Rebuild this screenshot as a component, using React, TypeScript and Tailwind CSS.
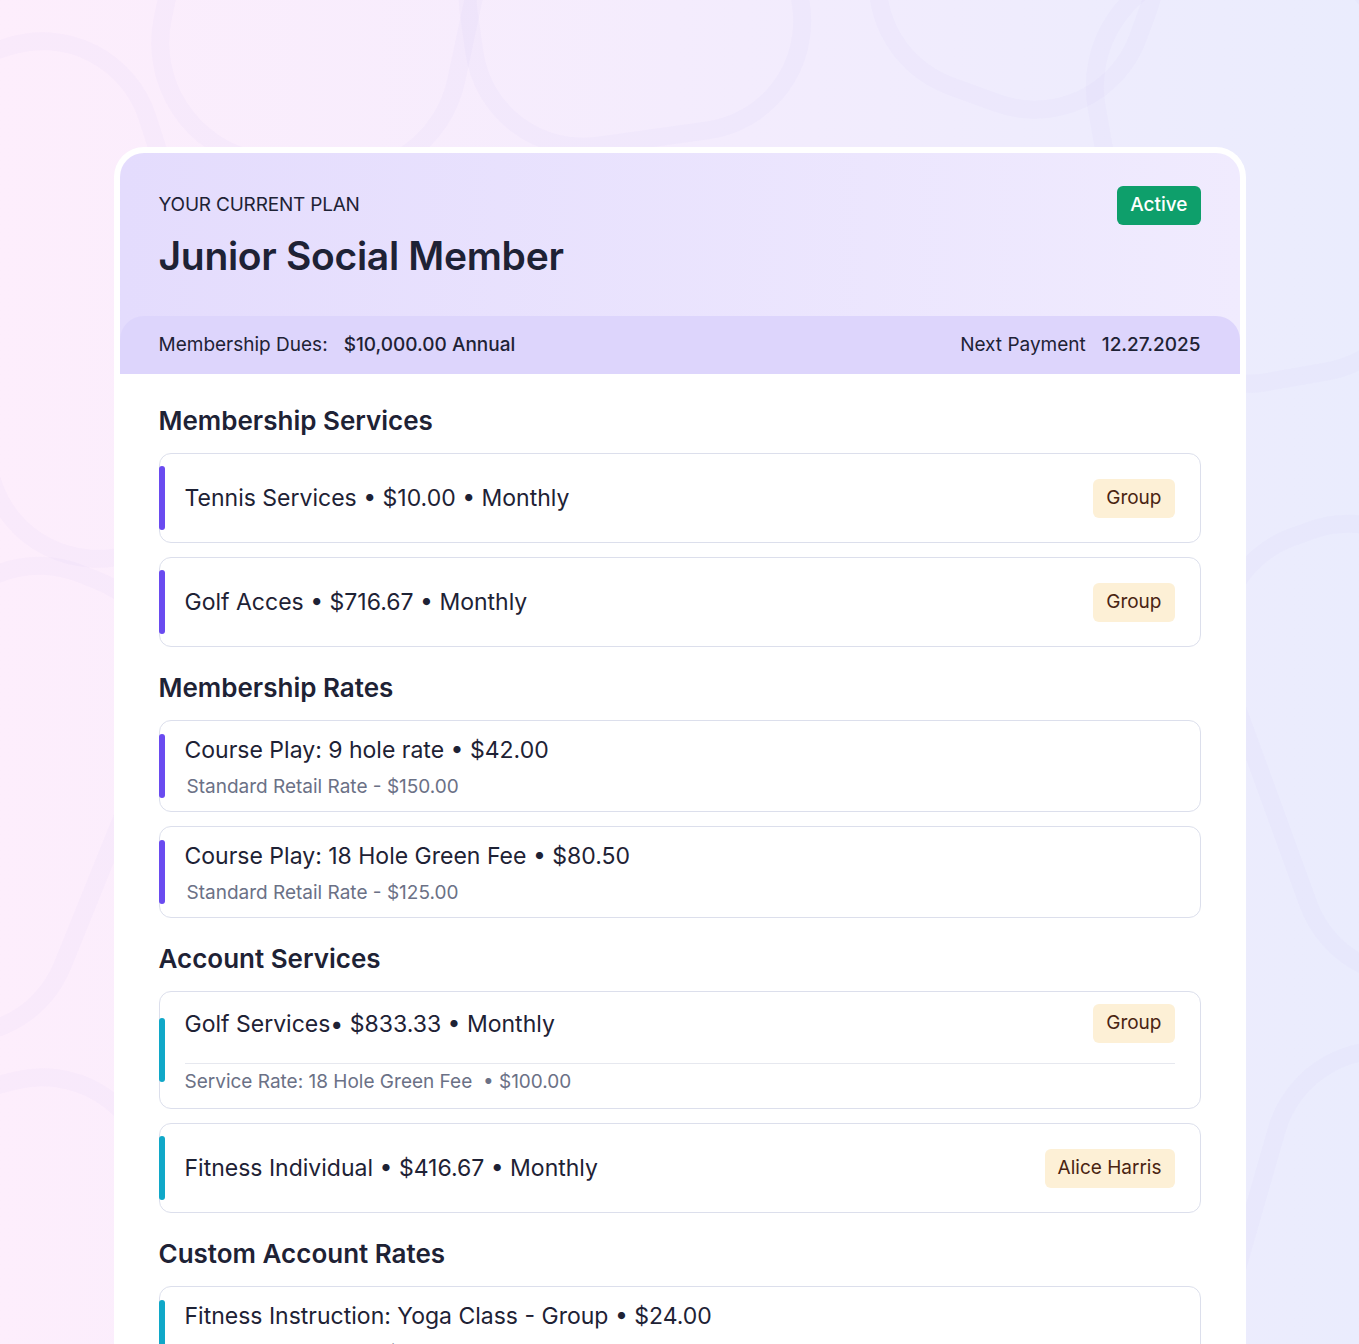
import React from "react";

type Item = {
  title: string;
  sub?: string;
  badge?: string;
  accent: "violet" | "cyan";
  divider?: boolean;
};

const sections: { heading: string; items: Item[] }[] = [
  {
    heading: "Membership Services",
    items: [
      { title: "Tennis Services • $10.00 • Monthly", badge: "Group", accent: "violet" },
      { title: "Golf Acces • $716.67 • Monthly", badge: "Group", accent: "violet" },
    ],
  },
  {
    heading: "Membership Rates",
    items: [
      { title: "Course Play: 9 hole rate • $42.00", sub: "Standard Retail Rate - $150.00", accent: "violet" },
      { title: "Course Play: 18 Hole Green Fee • $80.50", sub: "Standard Retail Rate - $125.00", accent: "violet" },
    ],
  },
  {
    heading: "Account Services",
    items: [
      {
        title: "Golf Services• $833.33 • Monthly",
        sub: "Service Rate: 18 Hole Green Fee \u00a0• $100.00",
        badge: "Group",
        accent: "cyan",
        divider: true,
      },
      { title: "Fitness Individual • $416.67 • Monthly", badge: "Alice Harris", accent: "cyan" },
    ],
  },
  {
    heading: "Custom Account Rates",
    items: [
      { title: "Fitness Instruction: Yoga Class - Group • $24.00", sub: "Standard Retail Rate - $50.00", accent: "cyan" },
    ],
  },
];

const Badge = ({ label }: { label: string }) => (
  <span className="flex h-[39px] items-center rounded-md bg-[#fdf0d6] px-[13px] text-[19px] text-[#4a2412]">
    {label}
  </span>
);

const Row = ({ item }: { item: Item }) => {
  const bar = item.accent === "violet" ? "bg-[#6a4bf0]" : "bg-[#10a8c8]";
  return (
    <div className="relative rounded-xl border border-[#dcdfec] bg-white px-[25px]">
      <span className={`absolute left-[-1px] top-1/2 h-16 w-[6px] -translate-y-1/2 rounded-full ${bar}`} />
      {item.divider ? (
        <div className="pt-[12px] pb-[13px]">
          <div className="flex items-center justify-between">
            <span className="text-[23px] leading-[30px] text-[#1e2235]">{item.title}</span>
            {item.badge && <Badge label={item.badge} />}
          </div>
          <div className="mt-[20px] h-px bg-[#e6e8ef]" />
          <div className="mt-[5px] text-[19px] leading-[26px] text-[#6b7186]">{item.sub}</div>
        </div>
      ) : item.sub ? (
        <div className="pt-[14px] pb-[11px]">
          <div className="text-[23px] leading-[30px] text-[#1e2235]">{item.title}</div>
          <div className="mt-[9px] pl-[2px] text-[19px] leading-[26px] text-[#6b7186]">{item.sub}</div>
        </div>
      ) : (
        <div className="flex h-[88px] items-center justify-between">
          <span className="text-[23px] leading-[30px] text-[#1e2235]">{item.title}</span>
          {item.badge && <Badge label={item.badge} />}
        </div>
      )}
    </div>
  );
};

const Backdrop = () => (
  <svg className="absolute inset-0 h-full w-full" viewBox="0 0 1359 1344" preserveAspectRatio="none">
    <g fill="none" stroke="#c9b4ef" strokeOpacity="0.07" strokeWidth="18">
      <rect x="-60" y="40" width="260" height="520" rx="110" transform="rotate(-18 70 300)" />
      <rect x="170" y="-160" width="300" height="330" rx="120" transform="rotate(12 320 0)" />
      <rect x="470" y="-120" width="330" height="260" rx="110" transform="rotate(-8 630 10)" />
      <rect x="880" y="-150" width="270" height="250" rx="110" transform="rotate(20 1010 -20)" />
      <rect x="1110" y="-40" width="300" height="420" rx="120" transform="rotate(-10 1260 170)" />
      <rect x="-120" y="560" width="240" height="480" rx="110" transform="rotate(22 0 800)" />
      <rect x="1260" y="520" width="240" height="460" rx="110" transform="rotate(-20 1380 750)" />
      <rect x="-80" y="1080" width="250" height="360" rx="110" transform="rotate(-14 40 1260)" />
      <rect x="1250" y="1050" width="240" height="380" rx="110" transform="rotate(16 1370 1240)" />
    </g>
  </svg>
);

export default function App() {
  return (
    <div
      className="relative h-[1344px] overflow-hidden bg-linear-to-r from-[#fdeefc] via-[#f4ecfd] to-[#eaecfd] text-[#1e2235]"
      style={{ fontFamily: "Inter, 'Noto Sans', sans-serif" }}
    >
      <Backdrop />
      <div className="relative mx-auto mt-[147px] w-[1132px] rounded-t-[30px] border-[6px] border-b-0 border-white bg-white">
        <div className="overflow-hidden rounded-t-[24px] bg-linear-to-r from-[#e4dcfd] to-[#f0ebfe]">
          <div className="px-[39px] pt-[33px] pb-[36px]">
            <div className="flex items-center justify-between">
              <span className="text-[19px] tracking-[-0.2px] text-[#1e2235]">YOUR CURRENT PLAN</span>
              <span className="flex h-[39px] items-center rounded-md bg-[#0e9f6b] px-[13px] text-[19px] font-medium text-white">
                Active
              </span>
            </div>
            <h1 className="mt-[7px] text-[39px] font-semibold leading-[48px] tracking-[-0.3px] text-[#1e2235]">
              Junior Social Member
            </h1>
          </div>
          <div className="flex h-[58px] items-center justify-between rounded-t-[24px] bg-[#ddd5fc] px-[39px] text-[19px]">
            <div className="flex gap-4">
              <span>Membership Dues:</span>
              <span className="font-medium">$10,000.00 Annual</span>
            </div>
            <div className="flex gap-4">
              <span>Next Payment</span>
              <span className="font-medium">12.27.2025</span>
            </div>
          </div>
        </div>
        <div className="flex flex-col gap-[25px] px-[39px] pt-[31px] pb-10">
          {sections.map((s) => (
            <section key={s.heading}>
              <h2 className="mb-4 text-[26px] font-semibold leading-[32px] text-[#1e2235]">{s.heading}</h2>
              <div className="flex flex-col gap-[14px]">
                {s.items.map((it) => (
                  <Row key={it.title} item={it} />
                ))}
              </div>
            </section>
          ))}
        </div>
      </div>
    </div>
  );
}
